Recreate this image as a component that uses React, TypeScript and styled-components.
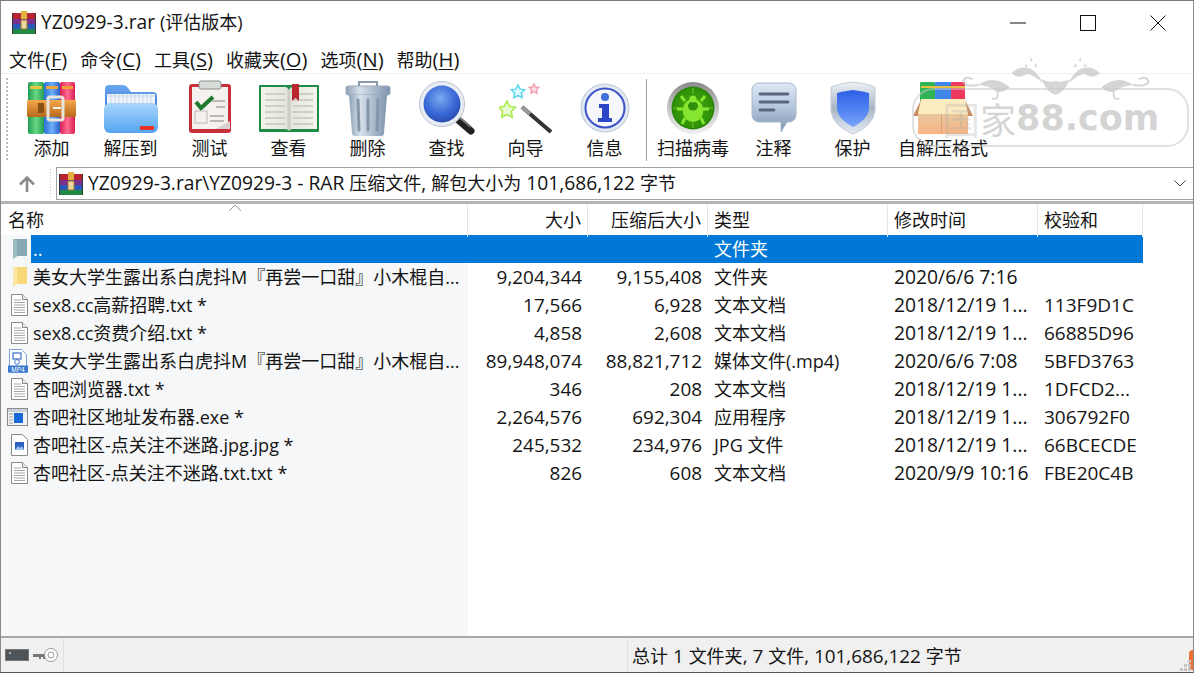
import React from "react";
import styled, { createGlobalStyle } from "styled-components";

const Global = createGlobalStyle`
  html, body { margin: 0; padding: 0; background: #fff; overflow: hidden; }
  * { box-sizing: border-box; }
`;
const FONT = `"Open Sans", "Noto Sans CJK SC", sans-serif`;

const Window = styled.div`
  position: relative; width: 1194px; height: 673px; display: flex; flex-direction: column;
  background: #fff; font-family: ${FONT}; color: #141414; overflow: hidden;
  border-top: 1px solid #7a7a7a; border-left: 1px solid #8a8a8a; border-right: 1px solid #8a8a8a; border-bottom: 1px solid #555;
`;
const Lat = styled.span<{ $k?: number }>`font-size: ${p => p.$k ?? 1.066}em;`;
const TitleBar = styled.div`display: flex; align-items: center; height: 43px; padding-left: 11px; flex: none;`;
const TitleText = styled.div`margin-left: 5px; font-size: 18px; line-height: 24px; flex: 1; position: relative; top: -1px;`;
const WinButton = styled.div`width: 70px; height: 43px; display: flex; align-items: center; justify-content: center;`;
const MenuBar = styled.div`display: flex; height: 30px; flex: none; padding-left: 8px; gap: 13px; font-size: 18px; line-height: 30px; border-bottom: 1px solid #f0f0f0;`;
const MenuItem = styled.span`white-space: nowrap; u { text-decoration-thickness: 1px; text-underline-offset: 2px; }`;
const Toolbar = styled.div`display: flex; height: 92px; flex: none; padding-left: 11px; position: relative;`;
const Grip = styled.div<{ $h: number }>`position: absolute; left: 5px; top: 4px; width: 2px; height: ${p => p.$h}px;
  background: repeating-linear-gradient(to bottom, #bdbdbd 0 2px, transparent 2px 4px);`;
const Tool = styled.div<{ $w?: number }>`width: ${p => p.$w ?? 79}px; display: flex; flex-direction: column; align-items: center; flex: none;`;
const ToolIcon = styled.div`height: 62px; padding-top: 5px; display: flex; align-items: center; justify-content: center;`;
const ToolLabel = styled.div`font-size: 18px; line-height: 24px; white-space: nowrap;`;
const ToolSep = styled.div`width: 1px; height: 82px; margin: 5px 5px 0 2px; background: #a0a0a0; flex: none;`;
const AddressRow = styled.div`display: flex; height: 38px; flex: none; align-items: flex-start; position: relative; border-bottom: 3px solid #b4b4b4; padding-top: 1px;`;
const UpButton = styled.div`width: 55px; height: 33px; display: flex; align-items: center; justify-content: center; padding-right: 4px; position: relative;
  &::after { content: ""; position: absolute; right: 5px; top: 2px; height: 30px; width: 1px;
    background: repeating-linear-gradient(to bottom, #c4c4c4 0 1px, transparent 1px 3px); }`;
const AddressBox = styled.div`flex: 1; height: 33px; border: 1px solid #a2a2a2; border-right: none; display: flex; align-items: center; padding-left: 2px; font-size: 18px; white-space: nowrap;`;
const AddressText = styled.span`flex: 1; margin-left: 5px; position: relative; top: -1px;`;
const Chevron = styled.div`width: 26px; display: flex; align-items: center; justify-content: center;`;
const Pane = styled.div`flex: 1; min-height: 0; display: flex; flex-direction: column; position: relative;
  background: linear-gradient(to right, #f6f7f8 467px, #fff 467px);`;
const cols = "467px 120px 120px 180px 150px 105px";
const Header = styled.div`display: grid; grid-template-columns: ${cols}; height: 31px; background: #fff; flex: none; width: 1142px;`;
const HeadCell = styled.div<{ $right?: boolean }>`font-size: 18px; line-height: 33px; padding: 0 6px; text-align: ${p => p.$right ? "right" : "left"};
  border-right: 1px solid #e6e6e6; position: relative;
  &:first-child { padding-left: 7px; }`;
const SortMark = styled.svg`position: absolute; left: 227px; top: 0;`;
const Row = styled.div`display: grid; grid-template-columns: ${cols}; height: 28px; width: 1142px; font-size: 18px; line-height: 28px;`;
const NameCell = styled.div`display: flex; align-items: stretch; min-width: 0;`;
const RowIcon = styled.div`width: 30px; flex: none; display: flex; align-items: center; justify-content: flex-end; padding-right: 3px;`;
const NameText = styled.div<{ $sel?: boolean }>`flex: 1; padding-left: 2px; white-space: nowrap; overflow: hidden;
  background: ${p => p.$sel ? "#0078d7" : "transparent"}; color: ${p => p.$sel ? "#fff" : "inherit"};`;
const Cell = styled.div<{ $right?: boolean; $sel?: boolean; $fs?: number }>`padding: 0 6px; white-space: nowrap; overflow: hidden; text-align: ${p => p.$right ? "right" : "left"};
  font-size: ${p => p.$fs ?? 18}px;
  background: ${p => p.$sel ? "#0078d7" : "transparent"}; color: ${p => p.$sel ? "#fff" : "inherit"};`;
const StatusBar = styled.div`height: 36px; flex: none; display: flex; align-items: center; background: #f0f0f0; border-top: 2px solid #a8a8a8; font-size: 18px; position: relative;`;
const StatusIcons = styled.div`width: 63px; height: 100%; display: flex; align-items: center; padding-left: 4px; gap: 3px; border-right: 1px solid #e0e0e0; flex: none;`;
const StatusSpacer = styled.div`width: 564px; height: 100%; border-right: 1px solid #e0e0e0; flex: none;`;
const StatusText = styled.div`padding-left: 4px; white-space: nowrap;`;
const ResizeGrip = styled.svg`position: absolute; right: 1px; bottom: 0;`;
const OrangeEdge = styled.div`position: absolute; right: 0; top: 12px; width: 4px; height: 20px; background: #f07030; border-radius: 4px 0 0 4px;`;
const Watermark = styled.div`position: absolute; left: 909px; top: 49px; width: 284px; height: 110px; pointer-events: none;`;
const WatermarkPill = styled.div`position: absolute; left: 2px; right: 5px; top: 38px; height: 59px; border: 2px solid rgba(200,200,200,.55); border-radius: 22px;
  display: flex; align-items: center; padding-left: 28px; color: rgba(170,170,170,.5); white-space: nowrap;`;
const WmGhost = styled.span`font-size: 38px; line-height: 30px; font-family: "Noto Sans CJK SC", sans-serif; opacity: .55;`;
const WmHan = styled.span`font-size: 36px; line-height: 30px; font-family: "Noto Sans CJK SC", sans-serif;`;
const WmLatin = styled.span`font-size: 35px; line-height: 30px; font-weight: 700; font-family: "DejaVu Sans", sans-serif;`;
const Ornament = styled.svg`position: absolute; left: 0; top: 0;`;

const RarIcon = ({ size = 58 }: { size?: number }) => (
  <svg width={size} height={size} viewBox="0 0 58 58">
    <defs>
      <linearGradient id="rg" x1="0" x2="1" y1="0" y2="0"><stop offset="0" stopColor="#1f9d55" /><stop offset=".5" stopColor="#6ad884" /><stop offset="1" stopColor="#1f9d55" /></linearGradient>
      <linearGradient id="rb" x1="0" x2="1" y1="0" y2="0"><stop offset="0" stopColor="#2a6fd8" /><stop offset=".5" stopColor="#6ab0f8" /><stop offset="1" stopColor="#2a5fc8" /></linearGradient>
      <linearGradient id="rr" x1="0" x2="1" y1="0" y2="0"><stop offset="0" stopColor="#d81f55" /><stop offset=".5" stopColor="#ff6a90" /><stop offset="1" stopColor="#d81f55" /></linearGradient>
      <linearGradient id="rs" x1="0" x2="0" y1="0" y2="1"><stop offset="0" stopColor="#f4a84a" /><stop offset="1" stopColor="#b8691c" /></linearGradient>
    </defs>
    <rect x="5" y="3" width="16" height="52" rx="2" fill="url(#rg)" />
    <rect x="21" y="3" width="16" height="52" rx="2" fill="url(#rb)" />
    <rect x="37" y="3" width="15" height="52" rx="2" fill="url(#rr)" />
    <rect x="7" y="7" width="12" height="3" fill="#e8c838" /><rect x="23" y="7" width="12" height="3" fill="#e8a838" /><rect x="39" y="7" width="11" height="3" fill="#f0a030" />
    <rect x="4" y="21" width="49" height="17" rx="1" fill="url(#rs)" />
    <rect x="15" y="24" width="6" height="10" fill="#8a4f14" />
    <rect x="25" y="18" width="15" height="23" rx="2" fill="none" stroke="#e8e4dc" strokeWidth="3" />
    <rect x="30" y="28" width="8" height="2" fill="#f2efe8" />
  </svg>
);
const SmallRar = () => (
  <svg width="24" height="24" viewBox="0 0 24 24">
    <rect x="0" y="2" width="24" height="6" fill="#b8242e" /><rect x="0" y="8" width="24" height="5" fill="#7a2f8e" /><rect x="0" y="13" width="24" height="5" fill="#2a58b8" /><rect x="0" y="18" width="24" height="5" fill="#1f8a45" />
    <rect x="0" y="2" width="1" height="21" fill="#333" /><rect x="23" y="2" width="1" height="21" fill="#333" />
    <rect x="9" y="0" width="6" height="8" fill="#e0b040" /><rect x="9" y="9" width="6" height="9" rx="1" fill="#e8d8a0" stroke="#a87820" />
  </svg>
);
const FolderBlue = () => (
  <svg width="58" height="54" viewBox="0 0 58 54">
    <defs>
      <linearGradient id="fb" x1="0" x2="0" y1="0" y2="1"><stop offset="0" stopColor="#a8d6fb" /><stop offset="1" stopColor="#55a4f0" /></linearGradient>
      <linearGradient id="fb2" x1="0" x2="0" y1="0" y2="1"><stop offset="0" stopColor="#6aa8f0" /><stop offset="1" stopColor="#3070d0" /></linearGradient>
    </defs>
    <path d="M3 8 a4 4 0 0 1 4-4 h14 a6 6 0 0 1 5 3 l3 4 h22 a4 4 0 0 1 4 4 v20 H3z" fill="url(#fb2)" />
    <rect x="5" y="13" width="48" height="14" fill="#eef5fb" />
    <path d="M5 15h48M9 13v12M13 13v12M17 13v12M21 13v12M25 13v12M29 13v12M33 13v12M37 13v12M41 13v12M45 13v12M49 13v12" stroke="#c0cede" strokeWidth=".7" />
    <path d="M2 28 a6 6 0 0 1 6-6 h42 a6 6 0 0 1 6 6 v18 a6 6 0 0 1-6 6 H8 a6 6 0 0 1-6-6z" fill="url(#fb)" />
    <rect x="38" y="45" width="14" height="4" fill="#e63228" />
  </svg>
);
const ClipboardIcon = () => (
  <svg width="44" height="56" viewBox="0 0 44 56">
    <rect x="1" y="4" width="42" height="49" rx="3" fill="#c92f38" />
    <rect x="4" y="7" width="36" height="42" fill="#f4f1ee" />
    <rect x="11" y="1" width="22" height="8" rx="2" fill="#d8dcd8" stroke="#8a8f8a" />
    <path d="M8 22 l5 6 l12-11" fill="none" stroke="#1f7a30" strokeWidth="4" />
    <rect x="7" y="31" width="12" height="12" fill="#f4f1ee" stroke="#c0b8b8" />
    <path d="M24 21h13M28 27h9M22 36h14M22 41h14" stroke="#a8a4a4" strokeWidth="1.5" />
    <path d="M28 49 L42 41 V49z" fill="#d8cfcf" />
  </svg>
);
const BookIcon = () => (
  <svg width="60" height="50" viewBox="0 0 60 50">
    <defs><linearGradient id="pg" x1="0" x2="1" y1="0" y2="0"><stop offset="0" stopColor="#f4f3ec" /><stop offset=".45" stopColor="#e6e5de" /><stop offset=".5" stopColor="#c8c8c0" /><stop offset=".55" stopColor="#e6e5de" /><stop offset="1" stopColor="#f4f3ec" /></linearGradient></defs>
    <rect x="0" y="2" width="60" height="47" rx="1" fill="#1d8c45" />
    <path d="M2 4 h24 q3 0 4 3 q1-3 4-3 h24 v42 H34 q-3 0-4 2 q-1-2-4-2 H2z" fill="url(#pg)" />
    <path d="M6 11h20M6 17h20M6 23h20M6 29h20M6 35h20M6 41h20M34 11h20M34 17h20M34 23h20M34 29h20M34 35h20M34 41h20" stroke="#cfcfc8" strokeWidth="2.2" />
    <path d="M33 1h7v17l-3.500-3-3.500 3z" fill="#b8262e" />
  </svg>
);
const TrashIcon = () => (
  <svg width="46" height="56" viewBox="0 0 46 56">
    <defs><linearGradient id="tr" x1="0" x2="1" y1="0" y2="0"><stop offset="0" stopColor="#8fa2b8" /><stop offset=".3" stopColor="#d6e0ea" /><stop offset="1" stopColor="#7f94ac" /></linearGradient></defs>
    <path d="M14 6 V2 h18 v4" fill="none" stroke="#8a9aac" strokeWidth="2" />
    <rect x="1" y="6" width="44" height="9" rx="2" fill="url(#tr)" stroke="#9aaabc" />
    <path d="M4 15 h38 l-3 38 a3 3 0 0 1-3 3 H10 a3 3 0 0 1-3-3z" fill="url(#tr)" />
    <path d="M13 20 l1 30M23 20v30M33 20l-1 30" stroke="#8496aa" strokeWidth="3" strokeLinecap="round" />
  </svg>
);
const SearchIcon = () => (
  <svg width="56" height="54" viewBox="0 0 56 54">
    <defs><radialGradient id="se" cx=".45" cy=".35" r=".7"><stop offset="0" stopColor="#7aaaf0" /><stop offset=".6" stopColor="#3a68d8" /><stop offset="1" stopColor="#2447a8" /></radialGradient></defs>
    <path d="M37 37 L52 50" stroke="#222" strokeWidth="7" strokeLinecap="round" />
    <path d="M41 37 L52 46" stroke="#777" strokeWidth="2" />
    <circle cx="23" cy="23" r="22.500" fill="#e8edf4" stroke="#b8c0cc" />
    <circle cx="23" cy="23" r="18.500" fill="url(#se)" />
  </svg>
);
const Star = ({ x, y, r, c, f }: { x: number; y: number; r: number; c: string; f: string }) => {
  const pts = Array.from({ length: 10 }, (_, i) => {
    const a = -Math.PI / 2 + (i * Math.PI) / 5; const q = i % 2 ? r * .5 : r;
    return `${x + q * Math.cos(a)},${y + q * Math.sin(a)}`;
  }).join(" ");
  return <polygon points={pts} fill={f} stroke={c} strokeWidth="1.500" />;
};
const WandIcon = () => (
  <svg width="54" height="52" viewBox="0 0 54 52">
    <Star x={8} y={28} r={9} c="#a8e848" f="#e8fbd0" />
    <Star x={19} y={10} r={7} c="#58d8f0" f="#e0fbff" />
    <Star x={35} y={7} r={5} c="#f4a0b0" f="#fde4ea" />
    <path d="M23 25 L52 50" stroke="#333" strokeWidth="4" />
    <path d="M23 25 L31 32" stroke="#999" strokeWidth="4" />
  </svg>
);
const InfoIcon = () => (
  <svg width="50" height="50" viewBox="0 0 50 50">
    <circle cx="25" cy="25" r="24" fill="#e2e8f2" stroke="#bcc6d6" />
    <circle cx="25" cy="25" r="19.500" fill="#f6f7fb" stroke="#3a54c8" strokeWidth="2" />
    <circle cx="25" cy="14" r="4" fill="#3f6fd8" />
    <path d="M19 21 h10 v14 h3 v4 H18 v-4 h4 v-10 h-3z" fill="#2c48c8" />
  </svg>
);
const BugIcon = () => (
  <svg width="54" height="54" viewBox="0 0 54 54">
    <defs>
      <radialGradient id="bg" cx=".5" cy=".5" r=".55"><stop offset="0" stopColor="#44aa10" /><stop offset=".8" stopColor="#2f9208" /><stop offset="1" stopColor="#1d7205" /></radialGradient>
      <linearGradient id="br" x1="0" y1="0" x2="0" y2="1"><stop offset="0" stopColor="#8a8a8a" /><stop offset=".5" stopColor="#c4c4c4" /><stop offset="1" stopColor="#efefef" /></linearGradient>
    </defs>
    <circle cx="27" cy="27" r="26" fill="url(#br)" />
    <circle cx="27" cy="27" r="21.500" fill="url(#bg)" />
    <path d="M27 7v5M27 42v5M7 27h5M42 27h5" stroke="#66c428" strokeWidth="1.200" />
    <path d="M17 28 a10 10 0 0 1 20 0 v3 a10 10 0 0 1-20 0z" fill="#86e630" />
    <ellipse cx="27" cy="25" rx="5" ry="4.500" fill="#2f8f0a" />
    <circle cx="27" cy="18" r="3.500" fill="#86e630" />
    <path d="M19 20 l-4-5M35 20l4-5M17 28 h-6M37 28 h6M19 37l-3 6M35 37l3 6" stroke="#86e630" strokeWidth="3" />
  </svg>
);
const NoteIcon = () => (
  <svg width="46" height="52" viewBox="0 0 46 52">
    <defs><linearGradient id="nt" x1="0" x2="0" y1="0" y2="1"><stop offset="0" stopColor="#dfe9f6" /><stop offset=".5" stopColor="#b4c6dc" /><stop offset="1" stopColor="#7f93b4" /></linearGradient></defs>
    <path d="M8 1 h30 a7 7 0 0 1 7 7 v25 a7 7 0 0 1-7 7 h-2 l-6 10 v-10 H8 a7 7 0 0 1-7-7 V8 a7 7 0 0 1 7-7z" fill="url(#nt)" stroke="#a8b8cc" />
    <path d="M9 12 h28M9 20 h28M9 28 h14" stroke="#5a667e" strokeWidth="2.800" strokeLinecap="round" />
  </svg>
);
const ShieldIcon = () => (
  <svg width="46" height="54" viewBox="0 0 46 54">
    <defs>
      <linearGradient id="sh" x1="0" x2="0" y1="0" y2="1"><stop offset="0" stopColor="#2f5ee8" /><stop offset=".5" stopColor="#4f82f2" /><stop offset="1" stopColor="#7aa4f8" /></linearGradient>
      <linearGradient id="sh2" x1="0" x2="0" y1="0" y2="1"><stop offset="0" stopColor="#eef2f6" /><stop offset=".5" stopColor="#a8b4c4" /><stop offset="1" stopColor="#e6ecf6" /></linearGradient>
    </defs>
    <path d="M23 1 Q35 2 45 6 V30 Q43 45 23 53 Q3 45 1 30 V6 Q11 2 23 1z" fill="url(#sh2)" stroke="#c4ccd6" />
    <path d="M23 9 Q31 10 39 12 V29 Q37 39 23 46 Q9 39 7 29 V12 Q15 10 23 9z" fill="url(#sh)" />
  </svg>
);
const SfxIcon = () => (
  <svg width="64" height="54" viewBox="0 0 64 54">
    <defs><linearGradient id="sg" x1="0" x2="0" y1="0" y2="1"><stop offset="0" stopColor="#e8c8a0" /><stop offset="1" stopColor="#f8b484" /></linearGradient></defs>
    <rect x="9" y="1" width="15" height="22" rx="1" fill="#2fb455" /><rect x="24" y="1" width="16" height="22" rx="1" fill="#3f86e8" /><rect x="40" y="1" width="14" height="22" rx="1" fill="#ee3860" />
    <rect x="10" y="5" width="44" height="2" fill="#e8c040" />
    <path d="M2 35 L10 19 V35z M62 35 L54 19 V35z" fill="#c88e62" />
    <rect x="7" y="33" width="50" height="20" fill="url(#sg)" />
    <path d="M10 18 H54 L57 33 H7z" fill="#fdecc0" />
    <rect x="30" y="33" width="1" height="20" fill="#e0a070" />
  </svg>
);
const TxtIcon = () => (
  <svg width="17" height="22" viewBox="0 0 17 22">
    <path d="M.5.5 h11 l5 5 v16 h-16z" fill="#fff" stroke="#8a8a8a" />
    <path d="M11.500.5 v5 h5" fill="#eee" stroke="#8a8a8a" />
    <path d="M3 6h7M3 8.500h11M3 11h11M3 13.500h11M3 16h11M3 18.500h11" stroke="#a8a8a8" />
  </svg>
);
const FolderSide = ({ up }: { up?: boolean }) => (
  <svg width="16" height="22" viewBox="0 0 16 22">
    <path d="M1 1 h14 v17 H5 l-4 3z" fill={up ? "#86a8b2" : "#f8d878"} />
    <path d="M1 1 l4 1 v16 l-4 3z" fill={up ? "#9cbcc4" : "#fbe8a8"} />
  </svg>
);
const Mp4Icon = () => (
  <svg width="20" height="24" viewBox="0 0 20 24">
    <path d="M1.500.5 h12 l5 5 v18 h-17z" fill="#fff" stroke="#7ca2d8" />
    <rect x="5" y="4" width="8" height="6" fill="none" stroke="#4a78c8" strokeWidth="1.300" /><circle cx="9" cy="13" r="2.400" fill="none" stroke="#4a78c8" />
    <rect x="0" y="16.500" width="20" height="7" fill="#3a78d0" />
    <text x="10" y="22.500" textAnchor="middle" fontSize="6.500" fontFamily="Liberation Sans, sans-serif" fill="#fff">MP4</text>
  </svg>
);
const ExeIcon = () => (
  <svg width="21" height="18" viewBox="0 0 21 18">
    <rect x=".5" y=".5" width="20" height="17" fill="#f2f2f2" stroke="#8a8a8a" />
    <rect x="1" y="1" width="19" height="3" fill="#c8d0dc" />
    <path d="M2 6h4M2 9h4M2 12h4M2 15h4" stroke="#a0a0a0" />
    <rect x="7" y="5" width="9" height="10" fill="#1468d8" />
  </svg>
);
const JpgIcon = () => (
  <svg width="17" height="22" viewBox="0 0 17 22">
    <path d="M.5.5 h11 l5 5 v16 h-16z" fill="#fff" stroke="#8a8a8a" />
    <rect x="4" y="8" width="9" height="8" fill="#2a62c0" />
    <path d="M4 16 l3-4 l2 2 l2-2 l2 4z" fill="#9cc4f0" />
  </svg>
);

const OrnamentHalf = () => (
  <g>
    <path d="M300 112 Q250 72 205 105 Q240 108 262 126 Q285 128 300 112z" />
    <path d="M205 104 Q168 112 158 96 Q165 76 188 88" fill="none" stroke="rgba(185,185,185,.6)" strokeWidth="6" />
    <path d="M262 126 Q268 150 246 146" fill="none" stroke="rgba(185,185,185,.6)" strokeWidth="5" />
    <path d="M305 70 Q325 45 362 56 Q388 72 398 100 Q372 74 350 72 Q325 90 305 70z" />
    <path d="M362 20 l6 12 l-8 2z M376 38 l7 12 l-9 0z M345 42 l10 6 l-10 4z" />
    <path d="M395 88 Q420 100 437 92 V135 Q410 128 395 88z" />
  </g>
);

const tools = [
  ["添加", <RarIcon />], ["解压到", <FolderBlue />], ["测试", <ClipboardIcon />], ["查看", <BookIcon />],
  ["删除", <TrashIcon />], ["查找", <SearchIcon />], ["向导", <WandIcon />], ["信息", <InfoIcon />],
] as const;
const tools2 = [["扫描病毒", <BugIcon />, 82], ["注释", <NoteIcon />, 79], ["保护", <ShieldIcon />, 79], ["自解压格式", <SfxIcon />, 102]] as const;

const LONG = "美女大学生露出系白虎抖M『再尝一口甜』小木棍自...";
const rows: [React.ReactNode, string, string, string, string, string, string][] = [
  [<FolderSide />, LONG, "9,204,344", "9,155,408", "文件夹", "2020/6/6 7:16", ""],
  [<TxtIcon />, "sex8.cc高薪招聘.txt *", "17,566", "6,928", "文本文档", "2018/12/19 1...", "113F9D1C"],
  [<TxtIcon />, "sex8.cc资费介绍.txt *", "4,858", "2,608", "文本文档", "2018/12/19 1...", "66885D96"],
  [<Mp4Icon />, LONG, "89,948,074", "88,821,712", "媒体文件(.mp4)", "2020/6/6 7:08", "5BFD3763"],
  [<TxtIcon />, "杏吧浏览器.txt *", "346", "208", "文本文档", "2018/12/19 1...", "1DFCD2..."],
  [<ExeIcon />, "杏吧社区地址发布器.exe *", "2,264,576", "692,304", "应用程序", "2018/12/19 1...", "306792F0"],
  [<JpgIcon />, "杏吧社区-点关注不迷路.jpg.jpg *", "245,532", "234,976", "JPG 文件", "2018/12/19 1...", "66BCECDE"],
  [<TxtIcon />, "杏吧社区-点关注不迷路.txt.txt *", "826", "608", "文本文档", "2020/9/9 10:16", "FBE20C4B"],
];

const menus: [string, string][] = [["文件", "F"], ["命令", "C"], ["工具", "S"], ["收藏夹", "O"], ["选项", "N"], ["帮助", "H"]];

export default function App() {
  return (
    <Window>
      <Global />
      <TitleBar>
        <SmallRar />
        <TitleText><Lat>YZ0929-3.rar </Lat>(评估版本)</TitleText>
        <WinButton><svg width="16" height="2"><path d="M0 1H16" stroke="#111" /></svg></WinButton>
        <WinButton><svg width="16" height="16"><rect x=".5" y=".5" width="15" height="15" fill="none" stroke="#111" /></svg></WinButton>
        <WinButton><svg width="16" height="16"><path d="M.5.5 15.500 15.500M15.500.5 .5 15.500" stroke="#111" /></svg></WinButton>
      </TitleBar>
      <MenuBar>
        {menus.map(([t, k]) => <MenuItem key={k}>{t}<Lat $k={1.12}>(<u>{k}</u>)</Lat></MenuItem>)}
      </MenuBar>
      <Toolbar>
        <Grip $h={82} />
        {tools.map(([l, ic]) => <Tool key={l}><ToolIcon>{ic}</ToolIcon><ToolLabel>{l}</ToolLabel></Tool>)}
        <ToolSep />
        {tools2.map(([l, ic, w]) => <Tool key={l} $w={w}><ToolIcon>{ic}</ToolIcon><ToolLabel>{l}</ToolLabel></Tool>)}
      </Toolbar>
      <AddressRow>
        <UpButton>
          <svg width="18" height="18" viewBox="0 0 18 18"><path d="M9 17V3M2 9.500 9 2.500l7 7" fill="none" stroke="#8c8c8c" strokeWidth="2.600" /></svg>
        </UpButton>
        <AddressBox>
          <SmallRar />
          <AddressText><Lat $k={1.068}>YZ0929-3.rar\YZ0929-3 - RAR </Lat>压缩文件<Lat $k={1.068}>, </Lat>解包大小为<Lat $k={1.068}> 101,686,122 </Lat>字节</AddressText>
          <Chevron><svg width="12" height="7"><path d="M.5.5 6 6l5.500-5.500" fill="none" stroke="#444" /></svg></Chevron>
        </AddressBox>
      </AddressRow>
      <Pane>
        <Header>
          <HeadCell>名称<SortMark width="14" height="8"><path d="M1 7 7 1l6 6" fill="none" stroke="#999" /></SortMark></HeadCell>
          <HeadCell $right>大小</HeadCell>
          <HeadCell $right>压缩后大小</HeadCell>
          <HeadCell>类型</HeadCell>
          <HeadCell>修改时间</HeadCell>
          <HeadCell>校验和</HeadCell>
        </Header>
        <Row>
          <NameCell><RowIcon><FolderSide up /></RowIcon><NameText $sel>..</NameText></NameCell>
          <Cell $sel /><Cell $sel /><Cell $sel>文件夹</Cell><Cell $sel /><Cell $sel />
        </Row>
        {rows.map((r, i) => (
          <Row key={i}>
            <NameCell><RowIcon>{r[0]}</RowIcon><NameText>{r[1]}</NameText></NameCell>
            <Cell $right $fs={18.9}>{r[2]}</Cell><Cell $right $fs={18.9}>{r[3]}</Cell><Cell>{r[4]}</Cell><Cell $fs={19.3}>{r[5]}</Cell><Cell $fs={19}>{r[6]}</Cell>
          </Row>
        ))}
      </Pane>
      <StatusBar>
        <StatusIcons>
          <svg width="24" height="12"><rect x=".5" y=".5" width="23" height="11" fill="#4f5458" stroke="#777" /><circle cx="5" cy="4" r="1.300" fill="#9ab" /></svg>
          <svg width="26" height="18" viewBox="0 0 26 18"><path d="M1 8h14v3h-2v2h-2v-2H9v2H7v-2H1z" fill="#777" /><circle cx="19" cy="9" r="6.500" fill="#fff" stroke="#999" /><circle cx="19" cy="9" r="3" fill="none" stroke="#999" /></svg>
        </StatusIcons>
        <StatusSpacer />
        <StatusText>总计<Lat $k={1.05}> 1 </Lat>文件夹<Lat $k={1.05}>, 7 </Lat>文件<Lat $k={1.05}>, 101,686,122 </Lat>字节</StatusText>
        <OrangeEdge />
        <ResizeGrip width="16" height="14"><path d="M12 2h3v3h-3zM12 6h3v3h-3zM8 6h3v3H8zM12 10h3v3h-3zM8 10h3v3H8zM4 10h3v3H4z" fill="#c4c4c4" /></ResizeGrip>
      </StatusBar>
      <Watermark>
        <Ornament width="284" height="110" viewBox="0 0 852 330">
          <g fill="rgba(185,185,185,.6)">
            <OrnamentHalf />
            <g transform="translate(874,0) scale(-1,1)"><OrnamentHalf /></g>
          </g>
        </Ornament>
        <WatermarkPill><WmGhost>国</WmGhost><WmHan>家</WmHan><WmLatin>88.com</WmLatin></WatermarkPill>
      </Watermark>
    </Window>
  );
}
